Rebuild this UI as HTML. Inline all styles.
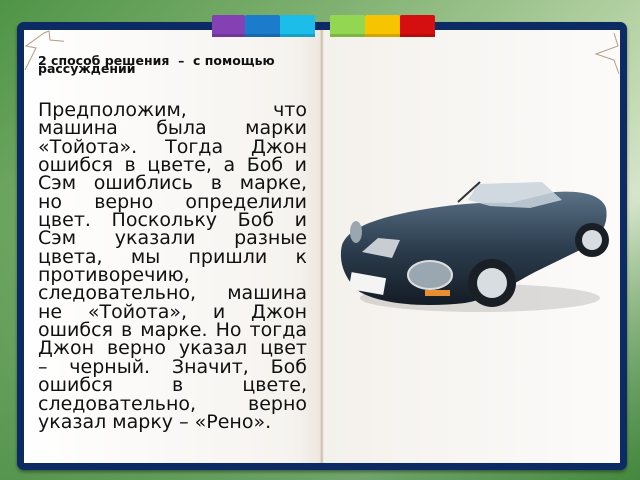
<!DOCTYPE html>
<html><head><meta charset="utf-8"><style>
html,body{margin:0;padding:0}
body{width:640px;height:480px;overflow:hidden;position:relative;background:linear-gradient(135deg,#4f9447 0%,#7fb070 30%,#b8d4a8 60%,#d7e6cc 75%,#6ea060 100%);font-family:"DejaVu Sans","Liberation Sans",sans-serif}
.bg2{position:absolute;inset:0;background:linear-gradient(180deg,rgba(255,255,255,0) 40%,rgba(40,120,40,.6) 100%)}
.frame{position:absolute;left:17px;top:22px;width:610px;height:448px;background:#0c2a63;border-radius:7px;box-shadow:0 2px 3px rgba(0,0,0,.4)}
.page{position:absolute;left:24px;top:30px;width:596px;height:433px;background:linear-gradient(90deg,#fff 0%,#f6f3ef 45%,#eee8e0 49.6%,#c9bca8 50%,#f4f1ec 50.3%,#fcfbfa 100%)}
.tab{position:absolute;top:15px;height:22px;border-radius:2px 2px 0 0;box-shadow:inset 0 -3px 0 rgba(0,0,0,.15)}
.h{position:absolute;left:38px;top:57px;font-size:12.5px;line-height:8px;color:#111;font-weight:bold;font-family:"DejaVu Sans",sans-serif}
.t{position:absolute;left:38px;top:101px;width:269px;font-size:19px;line-height:18.35px;color:#111}
.t div{text-align:justify;text-align-last:justify;white-space:nowrap}
.t div.l{text-align-last:left}
.corner{position:absolute}
</style></head><body>
<div class="bg2"></div>
<div class="frame"></div>
<div class="page"></div>
<div class="tab" style="left:212px;width:33px;background:#8441b3"></div>
<div class="tab" style="left:245px;width:35px;background:#1b7ccc"></div>
<div class="tab" style="left:280px;width:35px;background:#1cbde8"></div>
<div class="tab" style="left:330px;width:35px;background:#93d652"></div>
<div class="tab" style="left:365px;width:35px;background:#f6c400"></div>
<div class="tab" style="left:400px;width:35px;background:#d50f0f"></div>
<svg class="corner" style="left:24px;top:30px" width="40" height="40"><path d="M1 40 L12 18 L2 16 L20 3 L25 1 L26 10 L48 12" fill="none" stroke="#b89a80" stroke-width="1"/></svg>
<svg class="corner" style="left:580px;top:30px" width="40" height="45"><path d="M39 44 L34 30 L16 24 L38 16 L34 3" fill="none" stroke="#b89a80" stroke-width="1"/></svg>
<div class="h">2 способ решения &nbsp;– &nbsp;с помощью<br>рассуждений</div>
<div class="t">
<div>Предположим, что</div>
<div>машина была марки</div>
<div>«Тойота». Тогда Джон</div>
<div>ошибся в цвете, а Боб и</div>
<div>Сэм ошиблись в марке,</div>
<div>но верно определили</div>
<div>цвет. Поскольку Боб и</div>
<div>Сэм указали разные</div>
<div>цвета, мы пришли к</div>
<div class="l">противоречию,</div>
<div>следовательно, машина</div>
<div>не «Тойота», и Джон</div>
<div>ошибся в марке. Но тогда</div>
<div>Джон верно указал цвет</div>
<div>– черный. Значит, Боб</div>
<div>ошибся в цвете,</div>
<div>следовательно, верно</div>
<div class="l">указал марку – «Рено».</div>
</div>
<svg style="position:absolute;left:330px;top:170px" width="290" height="160" viewBox="0 0 290 160">
<defs><linearGradient id="b" x1="0" y1="0" x2="0" y2="1"><stop offset="0" stop-color="#5a7186"/><stop offset=".5" stop-color="#2c3d4e"/><stop offset="1" stop-color="#141c25"/></linearGradient></defs>
<ellipse cx="150" cy="128" rx="120" ry="14" fill="#000" opacity=".12"/>
<path d="M12 75 C18 58 45 48 90 40 C125 34 150 32 180 33 L225 22 C255 20 272 26 276 38 C279 55 270 70 250 80 L205 102 C185 112 165 128 135 133 C100 137 55 136 30 122 C15 110 8 92 12 75Z" fill="url(#b)"/>
<path d="M148 14 L212 12 L232 30 L200 38 L160 36 L138 30Z" fill="#c9d3dc" opacity=".85"/>
<path d="M128 32 L150 12" stroke="#333" stroke-width="2"/>
<path d="M32 82 L48 68 L70 70 L62 88 Z" fill="#c8cdd3"/>
<ellipse cx="100" cy="105" rx="22" ry="14" fill="#9aa6b0" stroke="#ddd" stroke-width="2"/>
<ellipse cx="26" cy="62" rx="6" ry="11" fill="#9aa6b0"/>
<rect x="20" y="105" width="35" height="17" fill="#f4f4f4" transform="rotate(10 37 113)"/>
<rect x="95" y="120" width="25" height="6" fill="#e89030"/>
<circle cx="162" cy="113" r="24" fill="#1a1f25"/>
<circle cx="162" cy="113" r="15" fill="#d8dde2"/>
<circle cx="262" cy="70" r="17" fill="#1a1f25"/>
<circle cx="262" cy="70" r="10" fill="#d8dde2"/>
</svg>
</body></html>
